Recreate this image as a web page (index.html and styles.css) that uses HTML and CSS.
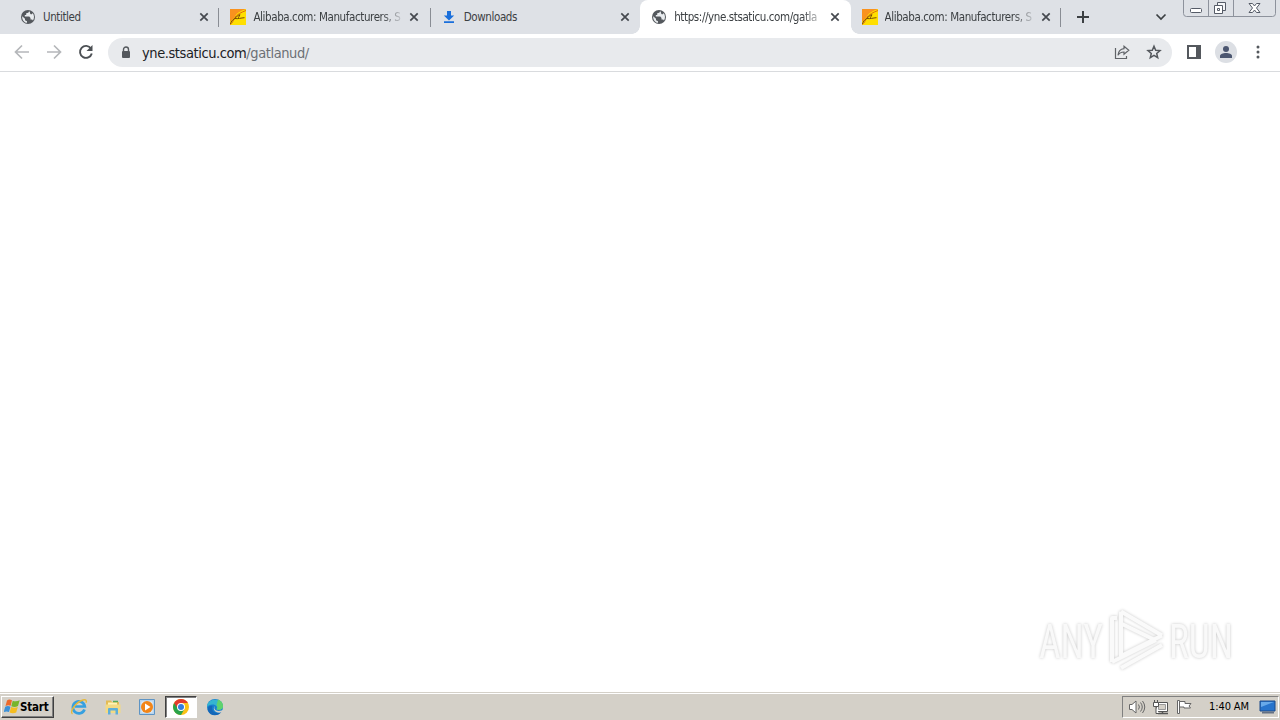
FILE: index.html
```html
<!DOCTYPE html>
<html lang="en">
<head>
    <meta charset="UTF-8">
    <title>yne.stsaticu.com/gatlanud/</title>
    <link rel="stylesheet" href="styles.css">
</head>
<body>
    <!-- shared icons -->
    <svg class="defs" width="0" height="0">
        <symbol id="globe" viewBox="0 0 16 16">
            <circle cx="8" cy="8" r="7" fill="#54585d"/>
            <path d="M2.200 7.200 5 9.700v1.500l2 1v1.600C4 13.500 1.900 10.800 2.200 7.200zM9 2.200c-.2 1.500-1.200 1.800-2.800 2v1.700H4.800v1.500h4.500l1.200 1.700v1.300h1.600l.9 1.100c1.600-2.400 1.200-5.600-.5-7.400-.2 1.500-1.500 1.500-2.200.7C9.700 4 10.500 2.700 9 2.200z" fill="#e9ecef"/>
        </symbol>
        <symbol id="close" viewBox="0 0 10 10">
            <path d="M1.300 1.300 8.700 8.700M8.700 1.300 1.300 8.700" stroke="#45494f" stroke-width="1.700"/>
        </symbol>
        <symbol id="alibaba" viewBox="0 0 16 16">
            <path d="M0 0h16v16H0z" fill="#ffdf00"/>
            <path d="M0 0h16C11 2 8 3 5.500 6.500 4 9 2 11 0 13z" fill="#f9921e"/>
            <path d="M0 15.500C3 14 3 11 5 8.500 7.500 5 11 3.500 16 1.500" fill="none" stroke="#dd6a10" stroke-width="1"/>
            <path d="M0 15c1.500-2 2-4.500 5-5.500 3 .6 6-.6 9.500-.8M5 8.500C7 8 8 6 10 5.700L8.300 8.800" fill="none" stroke="#6b3a08" stroke-width=".9"/>
        </symbol>
    </svg>

    <div class="tabstrip">
        <div class="tab">
            <svg class="favicon"><use href="#globe"/></svg>
            <span class="title">Untitled</span>
            <svg class="close"><use href="#close"/></svg>
        </div>
        <div class="tab">
            <svg class="favicon"><use href="#alibaba"/></svg>
            <span class="title fade">Alibaba.com: Manufacturers, S</span>
            <svg class="close"><use href="#close"/></svg>
        </div>
        <div class="tab no-line">
            <svg class="favicon" viewBox="0 0 16 16"><path d="M6 2h4v4.500h3.200L8 11.500 2.800 6.500H6zM3 12.300h10V14H3z" fill="#1a6fdb"/></svg>
            <span class="title">Downloads</span>
            <svg class="close"><use href="#close"/></svg>
        </div>
        <div class="tab active no-line">
            <svg class="favicon"><use href="#globe"/></svg>
            <span class="title fade">https://yne.stsaticu.com/gatla</span>
            <svg class="close"><use href="#close"/></svg>
        </div>
        <div class="tab">
            <svg class="favicon"><use href="#alibaba"/></svg>
            <span class="title fade">Alibaba.com: Manufacturers, S</span>
            <svg class="close"><use href="#close"/></svg>
        </div>
        <svg class="new-tab" viewBox="0 0 14 14"><path d="M7 1v12M1 7h12" stroke="#3c4043" stroke-width="2"/></svg>
        <svg class="tab-search" viewBox="0 0 12 8"><path d="M1.500 1.500 6 6l4.500-4.500" fill="none" stroke="#3c4043" stroke-width="1.700"/></svg>
        <svg class="window-buttons" viewBox="0 0 94 17">
            <path d="M.5 0v13.500q0 3 3 3h86q3 0 3-3V0M25.500 0v16M50.500 0v16" fill="none" stroke="#8d929c"/>
            <rect x="7.500" y="8.500" width="11" height="4" rx="1" fill="#fff" stroke="#555b67"/>
            <path d="M34.500 2.500h8v8h-8z" fill="#f4f5f7" stroke="#555b67"/>
            <path d="M31.500 5.500h8v8h-8z" fill="#fff" stroke="#555b67"/>
            <path d="M34.500 8.500h2v2h-2z" fill="none" stroke="#555b67"/>
            <path d="M66 3.500h3.500L71.500 6l2-2.500H77L73.500 8l3.500 4.500h-3.500l-2-2.500-2 2.500H66L69.500 8z" fill="#fff" stroke="#555b67"/>
        </svg>
    </div>

    <div class="toolbar">
        <svg class="nav" viewBox="0 0 16 16"><path d="M15 8H2M8 1.500 1.500 8 8 14.500" fill="none" stroke="#b5b7ba" stroke-width="1.700"/></svg>
        <svg class="nav" viewBox="0 0 16 16"><path d="M1 8h13M8 1.500 14.500 8 8 14.500" fill="none" stroke="#b5b7ba" stroke-width="1.700"/></svg>
        <svg class="nav" viewBox="0 0 16 16"><path d="M13 4.500A6 6 0 1 0 13.800 9.500" fill="none" stroke="#4c5054" stroke-width="1.900"/><path d="M14.500 1v6H8.500z" fill="#4c5054"/></svg>
        <div class="omnibox">
            <svg class="lock" viewBox="0 0 10 13"><path d="M2.500 5.500v-2a2.500 2.500 0 0 1 5 0v2" fill="none" stroke="#54585d" stroke-width="1.400"/><rect x="1" y="5" width="8" height="7" rx="1" fill="#54585d"/></svg>
            <span class="address"><span class="host">yne.stsaticu.com</span><span class="path">/gatlanud/</span></span>
            <svg class="share" viewBox="0 0 16 16"><path d="M1.500 4v10.500h11V12" fill="none" stroke="#606368" stroke-width="1.200"/><path d="M10 2.200 14.800 6.300 10 10.300V8C7 8 5.200 9 4 11.300 4.300 7.500 6.300 5 10 4.600z" fill="none" stroke="#606368" stroke-width="1.200"/></svg>
            <svg class="star" viewBox="0 0 16 16"><path d="m8 2.200 1.700 4 4.300.3-3.300 2.900 1 4.200L8 11.400l-3.700 2.200 1-4.200L2 6.500l4.300-.3z" fill="none" stroke="#54585d" stroke-width="1.500"/></svg>
        </div>
        <svg class="panel" viewBox="0 0 14 14"><path d="M1 1h12v12H1z" fill="#fff" stroke="#54585d" stroke-width="2"/><path d="M9 1h4v12H9z" fill="#54585d"/></svg>
        <svg class="avatar" viewBox="0 0 22 22"><circle cx="11" cy="11" r="11" fill="#dcdfe4"/><circle cx="11" cy="8" r="3" fill="#4b5670"/><path d="M5 17v-2c0-4 12-4 12 0v2z" fill="#4b5670"/></svg>
        <svg class="menu" viewBox="0 0 4 14"><circle cx="2" cy="2" r="1.500"/><circle cx="2" cy="7" r="1.500"/><circle cx="2" cy="12" r="1.500"/></svg>
    </div>

    <div class="page">
        <svg class="watermark" viewBox="0 0 210 70">
            <g class="wm-text">
                <text x="4" y="54" textLength="64" lengthAdjust="spacingAndGlyphs">ANY</text>
                <text x="134" y="54" textLength="64" lengthAdjust="spacingAndGlyphs">RUN</text>
            </g>
            <g class="wm-logo">
                <path d="M86 7.500 127 31.500M86 7.500V52l41-20.500M86 7.500v12l35 17M77 58V14h5M77 58l44-22M86 64l41-23"/>
            </g>
        </svg>
    </div>

    <div class="taskbar">
        <div class="start">
            <svg viewBox="0 0 16 15">
                <path d="M3 1.500C5 0 6 .5 8 1.300L6.700 6.700C5 6 3.500 6 1.500 6.900z" fill="#ed6a2c"/>
                <path d="M8.700 1.800c2 .8 4.500.8 7-.5l-1.700 5.800c-2.500 1.200-4.700 1-6.700.1z" fill="#77b52b"/>
                <path d="M1.200 7.800c2-1 3.600-.8 5.300-.1L5 13c-1.700-.7-3.300-.8-5.300.1z" fill="#3c91d8"/>
                <path d="M7.100 8c2.100 1 4.300 1 6.700.1L12.200 13.500c-2.200 1.100-4.500 1-6.600 0z" fill="#f5bd20"/>
            </svg>
            <span>Start</span>
        </div>
        <div class="quick">
            <svg viewBox="0 0 18 18"><path d="M14.500 11.500a6 6 0 1 1 .3-3H5" fill="none" stroke="#36a0e0" stroke-width="2.700"/><path d="M2.500 16C-1 14 6 4 13 2c3-.8 4 .5 3 2.800" fill="none" stroke="#e5b83a" stroke-width="1.400"/></svg>
        </div>
        <div class="quick">
            <svg viewBox="0 0 18 18"><path d="M2 2.500h5L8 4h7v11H2z" fill="#e3bb55"/><path d="M4 4.500h9v4H4z" fill="#fff3b5"/><path d="M1.500 6.500h15v8.500h-15z" fill="#f3da84"/><path d="M4 16.500v-5.500q0-1 1-1h8q1 0 1 1v5.500h-2.500v-4h-5v4z" fill="#5eaed9"/><path d="M9 3.500h5" stroke="#55a95b" stroke-width="1.500"/></svg>
        </div>
        <div class="quick">
            <svg viewBox="0 0 18 18"><path d="M1.500 1.500h15v15h-15z" fill="#b7d4ed" stroke="#5e94c4"/><path d="M3.500 3.500h11v11h-11z" fill="#e6f0f8"/><circle cx="9" cy="9" r="6" fill="#f28518"/><path d="M7 5.500 12.500 9 7 12.500z" fill="#fff"/></svg>
        </div>
        <div class="quick pressed">
            <svg viewBox="0 0 18 18"><circle cx="9" cy="9" r="8" fill="#fbc116"/><path d="M2.100 5A8 8 0 0 0 9 17l3.500-6z" fill="#29a34a"/><path d="M2.100 5A8 8 0 0 1 15.900 5H9l-3 6z" fill="#e33b2e"/><circle cx="9" cy="9" r="4" fill="#fff"/><circle cx="9" cy="9" r="3" fill="#347de0"/></svg>
        </div>
        <div class="quick">
            <svg viewBox="0 0 18 18"><circle cx="9" cy="9" r="8" fill="#1680cf"/><path d="M1.300 7C3 0 16 0 17 8c.3 3-3 4.500-6.500 3.200 1.500-2.200-.5-4.700-4-4.700C4 6.500 2 7.500 1 9z" fill="#35b5d0"/><path d="M12 1.600C16 3 17.500 6.500 17 9c-.5 2.800-4 3.500-6.500 2.200 1.500-1.500 1-3.200 0-4z" fill="#5fd26e"/><path d="M6.500 8C4.500 13 9 17 15.500 13.700 12 19 4 18 2 13 1 10 3 7 6.500 8z" fill="#1467b8"/><path d="M9 8c-2 3 1 6 6.500 4.500l2.500-.8v2l-3 .8C9 15.500 6 11 9 8z" fill="#d4d0c8"/></svg>
        </div>
        <div class="tray">
            <svg class="speaker" viewBox="0 0 18 16"><path d="M1.500 5.500H4L8 2v12l-4-3.500H1.500z" fill="#fff" stroke="#666"/><path d="M10.500 5.500q1.800 2.500 0 5M12.500 3.500q3.500 4.500 0 9M14.500 2q4.500 6 0 12" fill="none" stroke="#666"/></svg>
            <svg class="network" viewBox="0 0 17 16"><path d="M4.500 3.500h11v9h-11z" fill="#fff" stroke="#555"/><path d="M6.500 5.500h7v5h-7z" fill="#d4d0c8" stroke="#999"/><path d="M6 14.500h10M10.500 12.500v2" stroke="#555" stroke-width="1.500"/><path d="M2.500 1v3M5.500 1v3M1.500 3.500h5v4h-5zM4 8v6.500h3" fill="#fff" stroke="#555"/></svg>
            <svg class="flag" viewBox="0 0 16 16"><path d="M1.500 1.500h2v13h-2z" fill="#fff" stroke="#666"/><path d="M3.500 2.500H9v2h6l-2 2.500 1.500 2H8V8H3.500z" fill="#fff" stroke="#666"/></svg>
            <span class="clock">1:40 AM</span>
            <svg class="desktop" viewBox="0 0 17 14"><path d="M1 1h15v10H1z" fill="#2874cc" stroke="#1c4b8a"/><path d="M2 2h13L2 7z" fill="#68a9e9"/><path d="M3 12.500h12" stroke="#647184" stroke-width="2"/></svg>
        </div>
    </div>
</body>
</html>
```
FILE: styles.css
```css
* {
    box-sizing: border-box;
}
body {
    margin: 0;
    width: 1280px;
    height: 720px;
    display: flex;
    flex-direction: column;
    overflow: hidden;
    background: #fff;
    font-family: "DejaVu Sans Condensed", "DejaVu Sans", sans-serif;
    font-stretch: condensed;
    font-size: 11px;
}
svg {
    display: block;
    flex: none;
}
.defs {
    position: absolute;
}

/* tabs */
.tabstrip {
    display: flex;
    align-items: center;
    flex: none;
    height: 34px;
    padding-left: 9px;
    background: #dee1e6;
}
.tab {
    position: relative;
    flex: none;
    display: flex;
    align-items: center;
    width: 210.4px;
    height: 34px;
    padding-left: 11px;
    color: #3c4043;
}
.tab::after {
    content: "";
    position: absolute;
    right: -1px;
    top: 8px;
    width: 1px;
    height: 19px;
    background: #898d94;
}
.tab:first-child::after {
    right: 0;
}
.tab:nth-child(5)::after {
    right: 0;
}
.tab.no-line::after {
    display: none;
}
.tab.active {
    background: #fff;
    border-radius: 8px 8px 0 0;
}
/* curved feet of the selected tab */
.tab.active::before,
.tab.active::after {
    content: "";
    display: block;
    position: absolute;
    top: auto;
    bottom: 0;
    width: 8px;
    height: 8px;
}
.tab.active::before {
    left: -8px;
    background: radial-gradient(circle at 0 0, #dee1e6 7.5px, #fff 8px);
}
.tab.active::after {
    right: -8px;
    background: radial-gradient(circle at 100% 0, #dee1e6 7.5px, #fff 8px);
}
.favicon {
    width: 16px;
    height: 16px;
}
.title {
    width: 149px;
    margin-left: 7px;
    white-space: nowrap;
    font-size: 11.5px;
    letter-spacing: -0.4px;
    line-height: 16px;
}
.fade {
    -webkit-mask-image: linear-gradient(90deg, #000 128px, transparent 152px);
    mask-image: linear-gradient(90deg, #000 128px, transparent 152px);
}
.close {
    width: 10px;
    height: 10px;
    margin-left: 7px;
}
.new-tab {
    width: 14px;
    height: 14px;
    margin-left: 15px;
}
.tab-search {
    width: 12px;
    height: 8px;
    margin-left: 65px;
}
.window-buttons {
    width: 94px;
    height: 17px;
    margin-left: 16px;
    align-self: flex-start;
}

/* toolbar */
.toolbar {
    display: flex;
    align-items: center;
    flex: none;
    height: 38px;
    padding: 0 0 1px 14px;
    border-bottom: 1px solid #d9dbde;
}
.nav {
    width: 16px;
    height: 16px;
    margin-right: 16px;
}
.omnibox {
    display: flex;
    align-items: center;
    width: 1064px;
    height: 29px;
    margin-left: -2px;
    padding: 0 10px 0 13px;
    border-radius: 15px;
    background: #e8eaed;
}
.lock {
    width: 10px;
    height: 13px;
}
.address {
    flex: 1;
    margin-left: 11px;
    padding-top: 1px;
    font-size: 14.5px;
    letter-spacing: -0.42px;
    line-height: 18px;
}
.host {
    color: #202124;
}
.path {
    color: #6c7075;
}
.share {
    width: 16px;
    height: 16px;
    margin-right: 16px;
}
.star {
    width: 16px;
    height: 16px;
}
.panel {
    width: 14px;
    height: 14px;
    margin-left: 15px;
}
.avatar {
    width: 22px;
    height: 22px;
    margin-left: 14px;
}
.menu {
    width: 4px;
    height: 14px;
    margin-left: 19px;
    fill: #54585d;
}

/* page */
.page {
    flex: 1;
    display: flex;
    justify-content: flex-end;
    align-items: flex-end;
    padding: 0 35px 18px 0;
}
.watermark {
    width: 210px;
    height: 70px;
    filter: drop-shadow(0 0 1.5px rgba(0, 0, 0, 0.22));
}
.wm-text {
    font-family: Roboto, sans-serif;
    font-size: 49px;
    fill: #f9f9f9;
}
.wm-logo {
    fill: none;
    stroke: #fafafa;
    stroke-width: 4;
    stroke-linejoin: round;
}

/* taskbar */
.taskbar {
    display: flex;
    align-items: center;
    flex: none;
    height: 28px;
    padding: 0 1px;
    background: #d4d0c8;
    border-top: 1px solid #d4d0c8;
    box-shadow: inset 0 1px #fff;
}
.start {
    display: flex;
    align-items: center;
    width: 53px;
    height: 22px;
    margin-right: 9px;
    padding-left: 2px;
    border: 1px solid;
    border-color: #fff #404040 #404040 #fff;
    box-shadow: inset -1px -1px #808080;
    font-size: 11.5px;
    font-weight: bold;
    letter-spacing: -0.2px;
    color: #000;
}
.start svg {
    width: 16px;
    height: 15px;
}
.quick {
    display: flex;
    align-items: center;
    justify-content: center;
    width: 32px;
    height: 22px;
    margin-right: 2px;
}
.quick svg {
    width: 18px;
    height: 18px;
}
.quick.pressed {
    background: #fff;
    border: 1px solid;
    border-color: #404040 #fff #fff #404040;
    box-shadow: inset 1px 1px #808080;
}
.tray {
    display: flex;
    align-items: center;
    width: 157px;
    height: 22px;
    margin-left: auto;
    padding-left: 5px;
    border: 1px solid;
    border-color: #808080 #fff #fff #808080;
    color: #000;
}
.speaker {
    width: 18px;
    height: 16px;
}
.network {
    width: 17px;
    height: 16px;
    margin-left: 6px;
}
.flag {
    width: 16px;
    height: 16px;
    margin-left: 7px;
}
.clock {
    width: 42px;
    margin-left: 17px;
    white-space: nowrap;
    letter-spacing: -0.1px;
}
.desktop {
    width: 17px;
    height: 14px;
    margin-left: 8px;
}
```
